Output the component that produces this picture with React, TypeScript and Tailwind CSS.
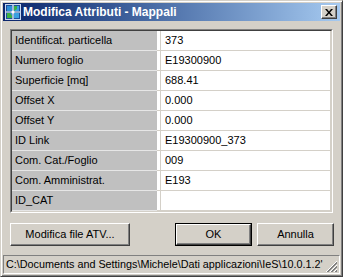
const rows: [string, string][] = [
  ["Identificat. particella", "373"],
  ["Numero foglio", "E19300900"],
  ["Superficie [mq]", "688.41"],
  ["Offset X", "0.000"],
  ["Offset Y", "0.000"],
  ["ID Link", "E19300900_373"],
  ["Com. Cat./Foglio", "009"],
  ["Com. Amministrat.", "E193"],
  ["ID_CAT", ""],
];

function AppIcon() {
  return (
    <svg width="16" height="16" viewBox="0 0 16 16" className="shrink-0">
      <rect x="0.5" y="0.5" width="15" height="15" fill="#1d4f9c" stroke="#c8d8f0" />
      <rect x="2" y="2" width="5" height="5" fill="#2f8fd8" />
      <rect x="9" y="2" width="5" height="5" fill="#3aa0e0" />
      <rect x="2" y="9" width="5" height="5" fill="#2f8fd8" />
      <rect x="9" y="9" width="5" height="5" fill="#3aa0e0" />
      <path d="M9 2h3v3L9 7z" fill="#3cb043" />
      <path d="M2 9l3 0 2 3v2H2z" fill="#3cb043" />
      <path d="M8 1v14M1 8h14" stroke="#ffffff" strokeWidth="1.2" />
      <circle cx="8" cy="8" r="1.6" fill="#ffffff" />
    </svg>
  );
}

function Button({ label, primary }: { label: string; primary?: boolean }) {
  const inner = (
    <div className="flex h-full w-full items-center justify-center border-t border-l border-t-white border-l-white border-r border-b border-r-[#404040] border-b-[#404040] bg-[#d4d0c8] shadow-[inset_-1px_-1px_#808080]">
      {label}
    </div>
  );
  return primary ? <div className="h-full w-full border border-black">{inner}</div> : inner;
}

export default function App() {
  return (
    <div
      className="flex h-[277px] w-[343px] flex-col border border-t-[#d4d0c8] border-l-[#d4d0c8] border-r-[#404040] border-b-[#404040] bg-[#d4d0c8] p-[2px] text-[11px] text-black shadow-[inset_1px_1px_#ffffff,inset_-1px_-1px_#808080]"
      style={{ fontFamily: '"Liberation Sans", Arial, sans-serif' }}
    >
      {/* title bar */}
      <div className="flex h-[18px] items-center bg-gradient-to-r from-[#0a246a] to-[#a6caf0] pl-[2px] pr-[3px]">
        <AppIcon />
        <span className="ml-[2px] text-[12px] font-bold leading-none text-white">
          Modifica Attributi - Mappali
        </span>
        <div className="ml-auto h-[14px] w-[16px]">
          <div className="flex h-full w-full items-center justify-center border-t border-l border-t-white border-l-white border-r border-b border-r-[#404040] border-b-[#404040] bg-[#d4d0c8] shadow-[inset_-1px_-1px_#808080]">
            <svg width="8" height="7" viewBox="0 0 8 7">
              <path d="M0 0h2l2 2.5L6 0h2L5 3.5 8 7H6L4 4.5 2 7H0l3-3.5z" fill="#000" />
            </svg>
          </div>
        </div>
      </div>

      {/* grid */}
      <div className="ml-[7px] mt-[8px] w-[323px] border border-t-[#808080] border-l-[#808080] border-r-white border-b-white">
        <div className="border border-t-[#404040] border-l-[#404040] border-r-[#d4d0c8] border-b-[#d4d0c8] bg-white">
          {rows.map(([label, value]) => (
            <div key={label} className="flex h-[20px]">
              <div className="flex w-[145px] items-center border-b border-b-[#e6e6e6] bg-[#c0c0c0] pl-[3px]">
                {label}
              </div>
              <div className="w-[3px] border-b border-b-[#d4d0c8]" />
              <div className="flex flex-1 items-center border-l border-r border-b border-[#d4d0c8] pl-[4px]">
                {value}
              </div>
            </div>
          ))}
        </div>
      </div>

      {/* buttons */}
      <div className="ml-[7px] mt-[10px] flex h-[23px] w-[324px]">
        <div className="w-[120px]">
          <Button label="Modifica file ATV..." />
        </div>
        <div className="ml-auto w-[77px]">
          <Button label="OK" primary />
        </div>
        <div className="ml-[5px] w-[77px]">
          <Button label="Annulla" />
        </div>
      </div>

      {/* status bar */}
      <div className="mt-auto flex h-[19px] items-center border border-t-[#808080] border-l-[#808080] border-r-white border-b-white">
        <span className="ml-[2px] shrink-0 whitespace-nowrap text-[10.8px]">
          C:\Documents and Settings\Michele\Dati applicazioni\IeS\10.0.1.2'
        </span>
        <svg width="12" height="12" viewBox="0 0 12 12" className="ml-auto mr-[1px] mt-auto shrink-0">
          <path d="M11 1L1 11M11 2L2 11" stroke="#808080" />
          <path d="M11 0L0 11" stroke="#ffffff" />
          <path d="M11 5L5 11M11 6L6 11" stroke="#808080" />
          <path d="M11 4L4 11" stroke="#ffffff" />
          <path d="M11 9L9 11M11 10L10 11" stroke="#808080" />
          <path d="M11 8L8 11" stroke="#ffffff" />
        </svg>
      </div>
    </div>
  );
}
